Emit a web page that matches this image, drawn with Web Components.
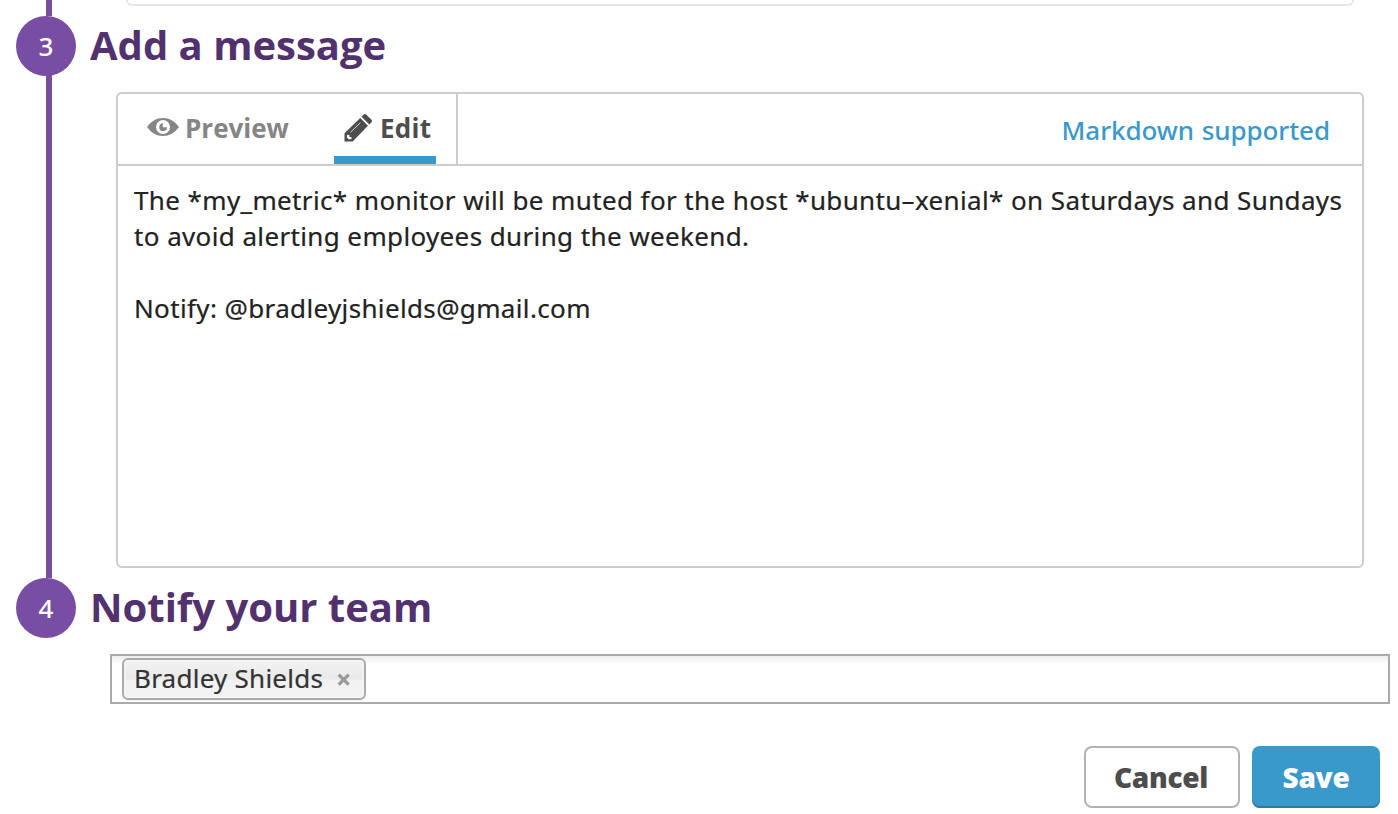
<!DOCTYPE html>
<html lang="en">
<head>
<meta charset="utf-8">
<title>Schedule downtime</title>
<style>
  html, body { margin: 0; height: 100%; background: #fff; overflow: hidden; }
  body { font-family: "Noto Sans", "Open Sans", sans-serif; color: #222; }
</style>
</head>
<body>
<downtime-form></downtime-form>
<script>
const define = (name, html) => {
  const t = document.createElement('template');
  t.innerHTML = html;
  customElements.define(name, class extends HTMLElement {
    constructor() {
      super();
      this.attachShadow({ mode: 'open' }).appendChild(t.content.cloneNode(true));
    }
  });
};

define('previous-step', `
<style>
  :host { display: flex; height: 16px; box-sizing: border-box; padding: 0 44px 0 46px; }
  .line { width: 6px; background: #774ea3; }
  .card { flex: 1; margin-left: 74px; height: 6px; box-sizing: border-box;
    border: 2px solid #e6e6e6; border-top: 0; border-radius: 0 0 6px 6px; }
</style>
<div class="line"></div><div class="card"></div>`);

define('form-step', `
<style>
  :host { display: flex; height: var(--step-height, auto); box-sizing: border-box; padding-left: 16px; }
  .rail { width: 60px; display: flex; flex-direction: column; flex: none; }
  .dot { width: 60px; height: 60px; border-radius: 50%; background: #774ea3; color: #fff;
    display: flex; align-items: center; justify-content: center; font: 500 26px/60px "Noto Sans", sans-serif; }
  .line { width: 6px; margin-left: 30px; flex: 1; margin-top: -1px; background: var(--line, #774ea3); }
  .main { flex: 1; min-width: 0; }
  h2 { margin: 0 0 0 14px; height: 60px; color: #52316f; white-space: nowrap;
    font: 700 40px/58px "Open Sans", sans-serif; }
</style>
<div class="rail"><div class="dot"><slot name="number"></slot></div><div class="line"></div></div>
<div class="main"><h2><slot name="title"></slot></h2><slot></slot></div>`);

define('editor-tab', `
<style>
  :host { display: flex; align-items: center; height: 70px; box-sizing: border-box; padding-bottom: 2px;
    color: #858585; font: 700 26px/36px "Open Sans", sans-serif; white-space: nowrap; }
  :host([active]) { color: #4d4d4d; letter-spacing: .3px; box-shadow: inset 0 -8px #3a99cb; }
</style>
<slot name="icon"></slot><slot></slot>`);

define('eye-icon', `
<style>:host { display: block; width: 32px; height: 18px; margin: -3px 6px 0 0; } svg { display: block; }</style>
<svg width="32" height="18" viewBox="0 0 32 18"><path fill="#858585" fill-rule="evenodd" d="M0 9C4.500 3 9.700 0 16 0s11.500 3 16 9c-4.500 6-9.700 9-16 9S4.500 15 0 9Zm16-7a7 7 0 1 0 0 14 7 7 0 0 0 0-14Z"/><path fill="#858585" d="M16.300 5.300a3.900 3.900 0 1 0 3.800 3.800l-2.900.5a1.700 1.700 0 0 1-1.600-2Z"/></svg>`);

define('pencil-icon', `
<style>:host { display: block; width: 28px; height: 28px; margin: -1px 8px 0 0; } svg { display: block; }</style>
<svg width="28" height="28" viewBox="0 0 28 28"><path fill="#4d4d4d" fill-rule="evenodd" d="M16.200 4 24 11.700 8.700 27.500H.5v-8.300L16.200 4ZM3.200 20.700l-.5 2.600 2.200 2.200 2.800-.5-.5-1.900-1.700-.2-.2-1.800Z"/><path stroke="#fff" stroke-opacity=".75" d="M6.500 18.300 16.300 8.800"/><path fill="#4d4d4d" d="m17.500 2.700 2-2c.9-.9 2-.9 2.900 0l4.900 4.900c.9.900.9 2 0 2.900l-2 2Z"/></svg>`);

define('message-editor', `
<style>
  :host { display: flex; flex-direction: column; margin: 16px 34px 0 40px; height: 476px; box-sizing: border-box;
    border: 2px solid #ccc; border-radius: 6px; background: #fff; }
  header { display: flex; height: 70px; border-bottom: 2px solid #ccc; }
  .tabs { display: flex; width: 338px; box-sizing: content-box; border-right: 2px solid #ccc; }
  .preview { margin-left: 29px; width: 187px; flex: none; }
  .edit { width: 102px; padding-left: 10px; flex: none; }
  .help { margin-left: auto; padding-right: 32px; font: 500 26px/72px "Noto Sans", sans-serif;
    color: #3a99cb; letter-spacing: -.08px; word-spacing: 1px; white-space: nowrap; }
  .body { padding: 16px 0 0 16px; font-size: 26px; line-height: 36px; color: #222;
    letter-spacing: .35px; word-spacing: .2px; -webkit-text-stroke: .2px; }
  .body div { height: 36px; white-space: nowrap; }
</style>
<header>
  <div class="tabs">
    <editor-tab class="preview"><eye-icon slot="icon"></eye-icon>Preview</editor-tab>
    <editor-tab class="edit" active><pencil-icon slot="icon"></pencil-icon>Edit</editor-tab>
  </div>
  <div class="help">Markdown supported</div>
</header>
<div class="body">
  <div>The *my_metric* monitor will be muted for the host *ubuntu–xenial* on Saturdays and Sundays</div>
  <div>to avoid alerting employees during the weekend.</div>
  <div></div>
  <div>Notify: @bradleyjshields@gmail.com</div>
</div>`);

define('team-select', `
<style>
  :host { display: flex; align-items: flex-start; box-sizing: border-box; height: 50px; margin: 16px 8px 0 34px;
    padding: 2px 10px; border: 2px solid #aaa; background: linear-gradient(#eee, #fff 8px); }
</style>
<slot></slot>`);

define('team-tag', `
<style>
  :host { display: flex; align-items: center; box-sizing: border-box; width: 244px; height: 42px;
    border: 2px solid #aaa; border-radius: 6px; padding: 0 13px 0 10px; justify-content: space-between;
    background: linear-gradient(#f4f4f4 20%, #f0f0f0 49%, #e8e8e8 51%, #eee);
    box-shadow: inset 0 0 3px #fff, 0 1px 0 rgba(0,0,0,.05); font-size: 26px; line-height: 38px; color: #333;
    letter-spacing: .25px; white-space: nowrap; -webkit-text-stroke: .2px; }
  :host { background: linear-gradient(#f3f3f3, #e9e9e9 50%, #f1f1f1 53%, #f3f3f3); }
  span { margin-top: -3px; }
  svg { display: block; margin-top: 1px; }
</style>
<span><slot></slot></span><svg width="14" height="14" viewBox="0 0 14 14"><path d="M1.700 1.700l10 10M11.700 1.700l-10 10" stroke="#999" stroke-width="3.300"/></svg>`);

define('form-button', `
<style>
  :host { display: block; box-sizing: border-box; width: 156px; height: 62px; border: 2px solid #b3b3b3; border-radius: 8px;
    padding-right: 2px; font: 800 28px/59px "Open Sans", sans-serif; letter-spacing: -.3px; text-align: center;
    color: #4d4d4d; background: #fff; }
  :host([primary]) { width: 128px; padding: 0; border: 0; background: #3a99cb; color: #fff; line-height: 63px;
    box-shadow: inset 0 -2px #2d7ba3; }
</style>
<slot></slot>`);

define('downtime-form', `
<style>
  :host { display: block; width: 1398px; height: 814px; overflow: hidden; }
  .message { --step-height: 562px; }
  .team { --line: transparent; }
  footer { display: flex; gap: 12px; justify-content: flex-end; margin: 42px 18px 0 0; }
</style>
<previous-step></previous-step>
<form-step class="message"><span slot="number">3</span><span slot="title">Add a message</span>
  <message-editor></message-editor></form-step>
<form-step class="team"><span slot="number">4</span><span slot="title">Notify your team</span>
  <team-select><team-tag>Bradley Shields</team-tag></team-select>
  <footer><form-button>Cancel</form-button><form-button primary>Save</form-button></footer></form-step>`);
</script>
</body>
</html>
